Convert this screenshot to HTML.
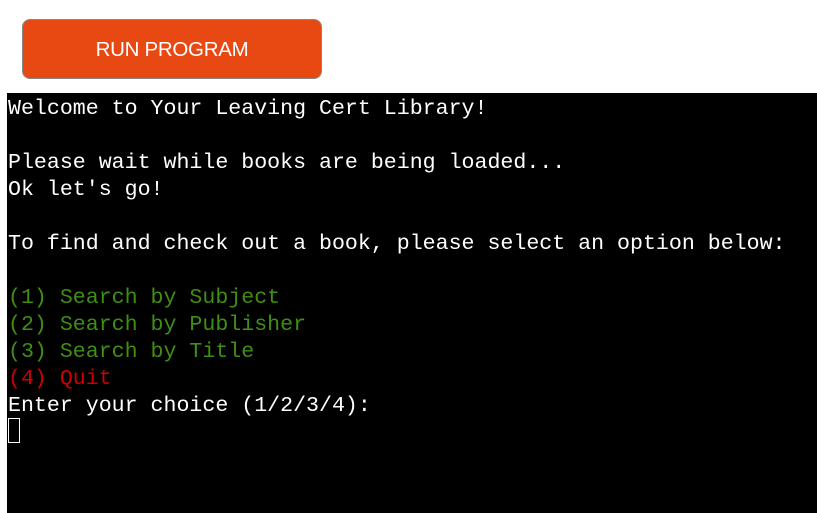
<!DOCTYPE html>
<html><head><style>
body{margin:0;width:817px;height:513px;background:#fff;position:relative;overflow:hidden}
.btn{position:absolute;left:22px;top:19px;width:298px;height:58px;background:#e84912;border:1px solid #888;border-radius:8px;color:#fff;font-family:"Liberation Sans",sans-serif;font-size:20.5px;line-height:60px;text-align:center;letter-spacing:-0.3px}
.term{position:absolute;left:7px;top:93px;width:810px;height:420px;background:#000;color:#fff;font-family:"Liberation Mono","Courier New",monospace;font-size:21.6px;line-height:27px;white-space:pre}
.t{position:absolute;left:1px;top:3px}
.g{color:#3f8f13}.r{color:#cc0000}
.cur{position:absolute;left:1px;top:325px;width:10px;height:23px;border:1px solid #fff}
</style></head><body>
<div class="btn">RUN PROGRAM</div>
<div class="term"><div class="t">Welcome to Your Leaving Cert Library!

Please wait while books are being loaded...
Ok let's go!

To find and check out a book, please select an option below:

<span class="g">(1) Search by Subject</span>
<span class="g">(2) Search by Publisher</span>
<span class="g">(3) Search by Title</span>
<span class="r">(4) Quit</span>
Enter your choice (1/2/3/4):</div><div class="cur"></div></div>
</body></html>
